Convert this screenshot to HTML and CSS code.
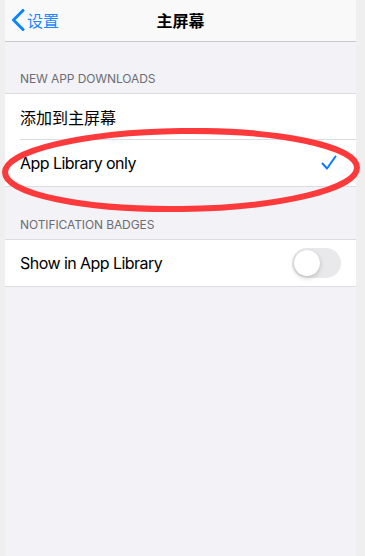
FILE: index.html
```html
<!DOCTYPE html>
<html lang="zh">
<head>
<meta charset="utf-8">
<link rel="stylesheet" href="styles.css">
</head>
<body>
<div class="phone">
  <header class="nav">
    <div class="back">
      <svg class="chev" width="14" height="22" viewBox="0 0 14 22"><path d="M12 1.5 L2.5 11 L12 20.5" fill="none" stroke="#0a84ff" stroke-width="3" stroke-linecap="round" stroke-linejoin="round"/></svg>
      <span>设置</span>
    </div>
    <div class="title">主屏幕</div>
  </header>

  <div class="sec-head">NEW APP DOWNLOADS</div>
  <div class="group">
    <div class="row"><span class="cjk">添加到主屏幕</span></div>
    <div class="row last"><span>App Library only</span>
      <svg class="check" width="16" height="16" viewBox="0 0 16 16"><path d="M1.5 8.5 L6 13.5 L14.5 1.5" fill="none" stroke="#0a7aff" stroke-width="2" stroke-linecap="round" stroke-linejoin="round"/></svg>
    </div>
  </div>

  <div class="sec-head second">NOTIFICATION BADGES</div>
  <div class="group">
    <div class="row last"><span>Show in App Library</span>
      <div class="toggle"><div class="knob"></div></div>
    </div>
  </div>

  <svg class="mark" width="365" height="100" viewBox="0 0 365 100"><ellipse cx="181" cy="42" rx="176" ry="39" fill="none" stroke="#fc3a3c" stroke-width="6" transform="rotate(-0.8 181 42)"/></svg>
</div>
</body>
</html>
```
FILE: styles.css
```css
* { box-sizing: border-box; }
html, body { margin: 0; padding: 0; }
body {
  background: #efeff0;
  font-family: Inter, "Liberation Sans", "Noto Sans CJK SC", sans-serif;
  width: 365px;
  height: 556px;
  overflow: hidden;
}
.phone {
  position: relative;
  margin-left: 5px;
  width: 351px;
  height: 556px;
  background: #f2f2f7;
}
.nav {
  position: relative;
  height: 42px;
  background: #f9f9f9;
  border-bottom: 1px solid #c8c7cc;
  display: flex;
  align-items: center;
  justify-content: center;
}
.back {
  position: absolute;
  left: 6px;
  top: 9px;
  display: flex;
  align-items: center;
  gap: 2px;
  color: #1a86ff;
  font-size: 16px;
  font-family: "Noto Sans CJK SC", sans-serif;
  line-height: 22px;
}
.title {
  font-family: "Noto Sans CJK SC", sans-serif;
  font-weight: 600;
  font-size: 16px;
  color: #000;
  margin-top: -1px;
}
.sec-head {
  padding: 29px 15px 6px;
  font-size: 12px;
  line-height: 16px;
  color: #6d6d72;
  letter-spacing: -0.1px;
}
.sec-head.second { padding-top: 30px; }
.group {
  background: #fff;
  border-top: 1px solid #dcdce0;
  border-bottom: 1px solid #dcdce0;
}
.row {
  height: 46px;
  margin-left: 15px;
  padding-right: 15px;
  display: flex;
  align-items: center;
  justify-content: space-between;
  border-bottom: 1px solid #dcdce0;
  font-size: 16px;
  letter-spacing: -0.55px;
  color: #000;
  font-family: Inter, "Noto Sans CJK SC", sans-serif;
}
.row .cjk { letter-spacing: 0; font-family: "Noto Sans CJK SC", sans-serif; }
.row.last { border-bottom: none; height: 46px; }
.check { margin-right: 4px; }
.toggle {
  width: 49px;
  height: 30px;
  border-radius: 15px;
  background: #e9e9eb;
  padding: 2px;
}
.knob {
  width: 26px;
  height: 26px;
  border-radius: 50%;
  background: #fff;
  box-shadow: 0 2px 5px rgba(0,0,0,0.18), 0 0 1px rgba(0,0,0,0.12);
}
.mark {
  position: absolute;
  left: -5px;
  top: 128px;
  pointer-events: none;
}
```
